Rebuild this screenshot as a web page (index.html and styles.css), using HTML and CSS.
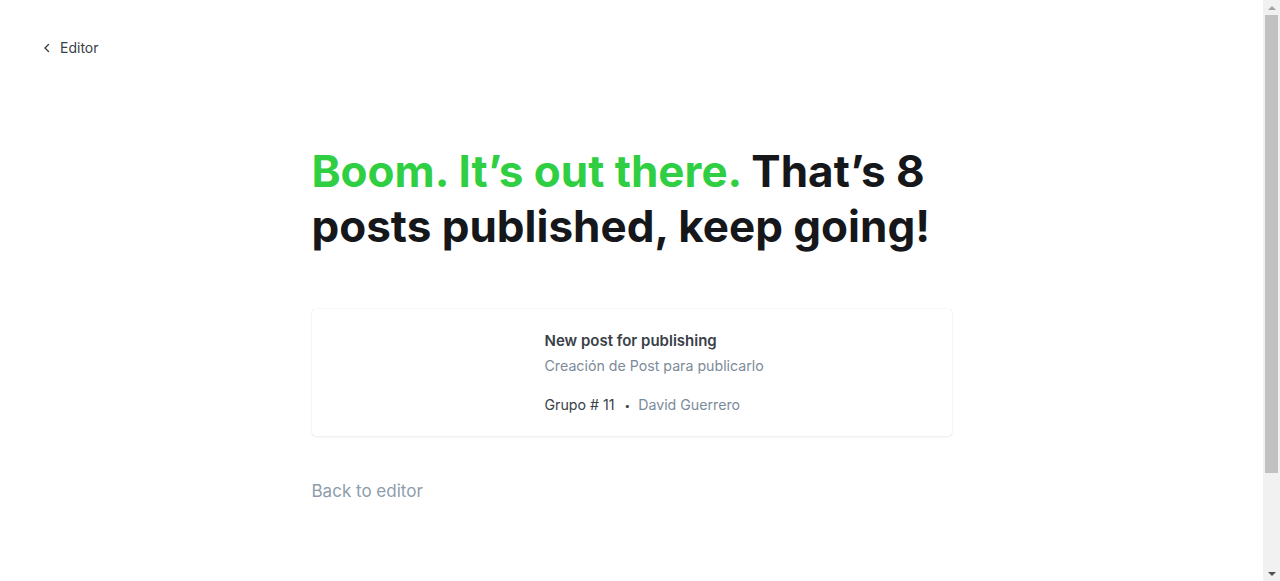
FILE: index.html
```html
<!DOCTYPE html>
<html lang="en">
<head>
<meta charset="utf-8">
<title>Published</title>
<link rel="stylesheet" href="styles.css">
</head>
<body>
<div class="page">
  <header class="topbar">
    <a class="back-link" href="#">
      <svg class="chev" width="8" height="10" viewBox="0 0 8 10" aria-hidden="true"><path d="M5.5 1.5 L2 5 L5.5 8.5" fill="none" stroke="#394047" stroke-width="1.4" stroke-linecap="round" stroke-linejoin="round"/></svg>
      <span>Editor</span>
    </a>
  </header>
  <main class="content">
    <h1 class="headline"><span class="green">Boom. It’s out there.</span> That’s 8 posts published, keep going!</h1>
    <div class="card">
      <div class="thumb"></div>
      <div class="card-body">
        <div class="card-title">New post for publishing</div>
        <div class="card-excerpt">Creación de Post para publicarlo</div>
        <div class="card-meta"><span class="site">Grupo # 11</span><span class="dot">•</span><span class="author">David Guerrero</span></div>
      </div>
    </div>
    <a class="back-editor" href="#">Back to editor</a>
  </main>
</div>
<div class="scrollbar" aria-hidden="true">
  <div class="sb-arrow up"></div>
  <div class="sb-track"><div class="sb-thumb"></div></div>
  <div class="sb-arrow down"></div>
</div>
</body>
</html>
```
FILE: styles.css
```css
html, body {
  margin: 0;
  padding: 0;
  background: #fff;
}
body {
  font-family: Inter, "Noto Sans", sans-serif;
  color: #15171a;
  -webkit-font-smoothing: antialiased;
}
a { text-decoration: none; }
.page {
  width: calc(100% - 17px);
  min-height: 700px;
  box-sizing: border-box;
}
.topbar {
  padding: 37px 0 0 43px;
  height: 21px;
}
.back-link {
  display: inline-flex;
  align-items: center;
  gap: 9px;
  color: #394047;
  font-size: 14px;
  line-height: 18px;
}
.content {
  width: 640px;
  margin: 0 auto;
  padding-top: 86px;
}
.headline {
  margin: 0;
  font-size: 44px;
  line-height: 55px;
  font-weight: 700;
  letter-spacing: 0;
  color: #15171a;
}
.green { color: #30cf43; }
.card {
  margin-top: 55px;
  display: flex;
  height: 127px;
  box-sizing: border-box;
  border-radius: 4px;
  box-shadow: 0 0 1px rgba(0,0,0,0.2), 0 1px 3px rgba(0,0,0,0.06);
  padding: 21px 24px 0 0;
}
.thumb {
  width: 233px;
  flex: none;
}
.card-body {
  display: flex;
  flex-direction: column;
}
.card-title {
  font-size: 15px;
  font-weight: 600;
  line-height: 22px;
  color: #394047;
}
.card-excerpt {
  margin-top: 4px;
  font-size: 14.2px;
  line-height: 20px;
  color: #7c8b9a;
}
.card-meta {
  margin-top: 19px;
  font-size: 14.2px;
  line-height: 20px;
  display: flex;
  align-items: center;
}
.site { color: #394047; }
.dot {
  color: #394047;
  font-size: 10px;
  margin: 0 8px 0 10px;
}
.author { color: #7c8b9a; }
.back-editor {
  display: inline-block;
  margin-top: 45px;
  font-size: 17px;
  line-height: 20px;
  color: #8e9cac;
}
.scrollbar {
  position: fixed;
  top: 0;
  right: 0;
  width: 17px;
  height: 100vh;
  background: #f1f1f1;
  display: flex;
  flex-direction: column;
}
.sb-arrow {
  height: 15px;
  flex: none;
  display: flex;
  align-items: center;
  justify-content: center;
}
.sb-arrow::before {
  content: "";
  width: 0;
  height: 0;
  border-left: 4px solid transparent;
  border-right: 4px solid transparent;
}
.sb-arrow.up::before { border-bottom: 4px solid #a3a3a3; }
.sb-arrow.down::before { border-top: 4px solid #505050; }
.sb-track {
  flex: 1;
  padding: 0 2px;
}
.sb-thumb {
  height: 458px;
  background: #c1c1c1;
}
```
